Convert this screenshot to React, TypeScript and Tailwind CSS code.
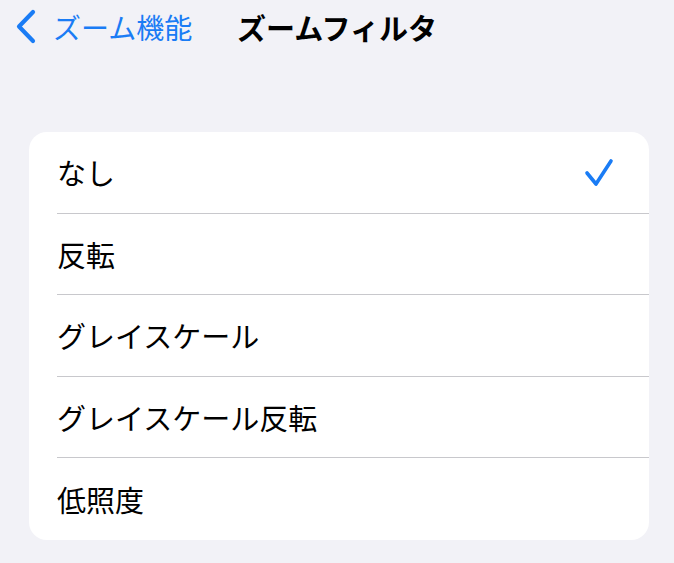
import React from "react";

const items = ["なし", "反転", "グレイスケール", "グレイスケール反転", "低照度"];

export default function App() {
  return (
    <div
      className="w-[674px] h-[563px] bg-[#f2f2f7] overflow-hidden"
      style={{ fontFamily: '"Noto Sans CJK JP", "Noto Sans", sans-serif' }}
    >
      <div className="relative h-[54px] flex items-center">
        <div className="flex items-center pl-[14px]">
          <svg width="24" height="36" viewBox="0 0 24 36" className="mr-[15px]">
            <polyline
              points="19,3 5,17.5 19,32"
              fill="none"
              stroke="#1a7cf5"
              strokeWidth="4.2"
              strokeLinecap="round"
              strokeLinejoin="round"
            />
          </svg>
          <span className="text-[28px] leading-none text-[#1a7cf5]">ズーム機能</span>
        </div>
        <div className="absolute left-0 right-0 top-0 h-full flex items-center justify-center pointer-events-none">
          <span className="text-[29px] leading-none font-bold text-black">ズームフィルタ</span>
        </div>
      </div>
      <div className="h-[78px]" />
      <div className="ml-[29px] w-[620px] bg-white rounded-[18px] overflow-hidden">
        {items.map((t, i) => (
          <div key={t} className="relative h-[81.6px] flex items-center pl-[28px] pr-[35px]">
            <span className="text-[29px] leading-none text-black">{t}</span>
            {i === 0 && (
              <svg width="30" height="30" viewBox="0 0 30 30" className="ml-auto">
                <polyline
                  points="3,15 12,26 27,3"
                  fill="none"
                  stroke="#1a7cf5"
                  strokeWidth="3.6"
                  strokeLinecap="round"
                  strokeLinejoin="round"
                />
              </svg>
            )}
            {i < items.length - 1 && (
              <div className="absolute left-[28px] right-0 bottom-0 h-px bg-[#c8c8cc]" />
            )}
          </div>
        ))}
      </div>
    </div>
  );
}
